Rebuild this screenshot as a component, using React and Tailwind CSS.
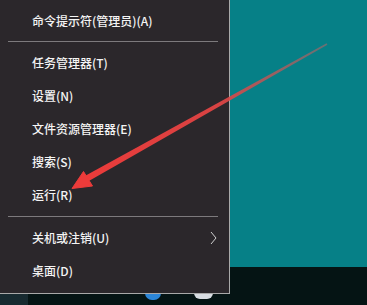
import React from "react";

const items = [
  { label: "命令提示符(管理员)(A)" },
  { sep: true, cls: "pt-[4px] pb-[4px]" },
  { label: "任务管理器(T)" },
  { label: "设置(N)" },
  { label: "文件资源管理器(E)" },
  { label: "搜索(S)" },
  { label: "运行(R)" },
  { sep: true, cls: "pt-[5px] pb-[4px]" },
  { label: "关机或注销(U)", sub: true },
  { label: "桌面(D)" },
];

const Arrow = () => (
  <svg className="absolute left-0 top-0 pointer-events-none" width="367" height="305" viewBox="0 0 367 305">
    <defs>
      <linearGradient id="shaft" x1="86" y1="179" x2="327" y2="44" gradientUnits="userSpaceOnUse">
        <stop offset="0" stopColor="#ec3b3a" />
        <stop offset="0.55" stopColor="#e04444" stopOpacity="0.95" />
        <stop offset="1" stopColor="#b86464" stopOpacity="0.55" />
      </linearGradient>
    </defs>
    <polygon points="87.6,181.8 84.4,176.2 326.6,43.3 327.4,44.7" fill="url(#shaft)" />
    <polygon points="72,188.5 83.5,171.5 92.5,186" fill="#ec3b3a" stroke="#ec3b3a" strokeWidth="1" strokeLinejoin="round" />
  </svg>
);

export default function App() {
  return (
    <div className="relative w-[367px] h-[305px] overflow-hidden flex flex-col bg-[#068087]" style={{ fontFamily: '"Noto Sans CJK SC", "Liberation Sans", sans-serif' }}>
      <div className="flex-1" />
      {/* taskbar */}
      <div className="h-[38px] flex bg-[#051414]">
        <div className="w-[28px] bg-[#172a30]" />
        <div className="flex-1 flex">
          <div className="ml-[117px] mt-[26px] w-[16px] h-[7px] rounded-b-full bg-[#2c86d8]" />
          <div className="ml-[33px] mt-[26px] w-[19px] h-[6px] rounded-b-md bg-[#d8dde2]" />
        </div>
      </div>

      {/* context menu */}
      <div className="absolute left-0 top-0 w-[230px] h-[294px] bg-[#2b272b] border-r border-b border-[#a9a9a9] pt-[4px] text-[12px] font-medium text-[#f4f4f4]">
        {items.map((it, i) =>
          it.sep ? (
            <div key={i} className={`pl-[8px] pr-[11px] ${it.cls}`}>
              <div className="h-px bg-[#7d7a7d]" />
            </div>
          ) : (
            <div key={i} className="h-[33px] flex items-center justify-between pl-[32px] pr-[12px]">
              <span>{it.label}</span>
              {it.sub && (
                <svg width="7" height="14" viewBox="0 0 7 14">
                  <path d="M1 1 L6 7 L1 13" fill="none" stroke="#d0d0d0" strokeWidth="1" />
                </svg>
              )}
            </div>
          )
        )}
      </div>

      <Arrow />
    </div>
  );
}
